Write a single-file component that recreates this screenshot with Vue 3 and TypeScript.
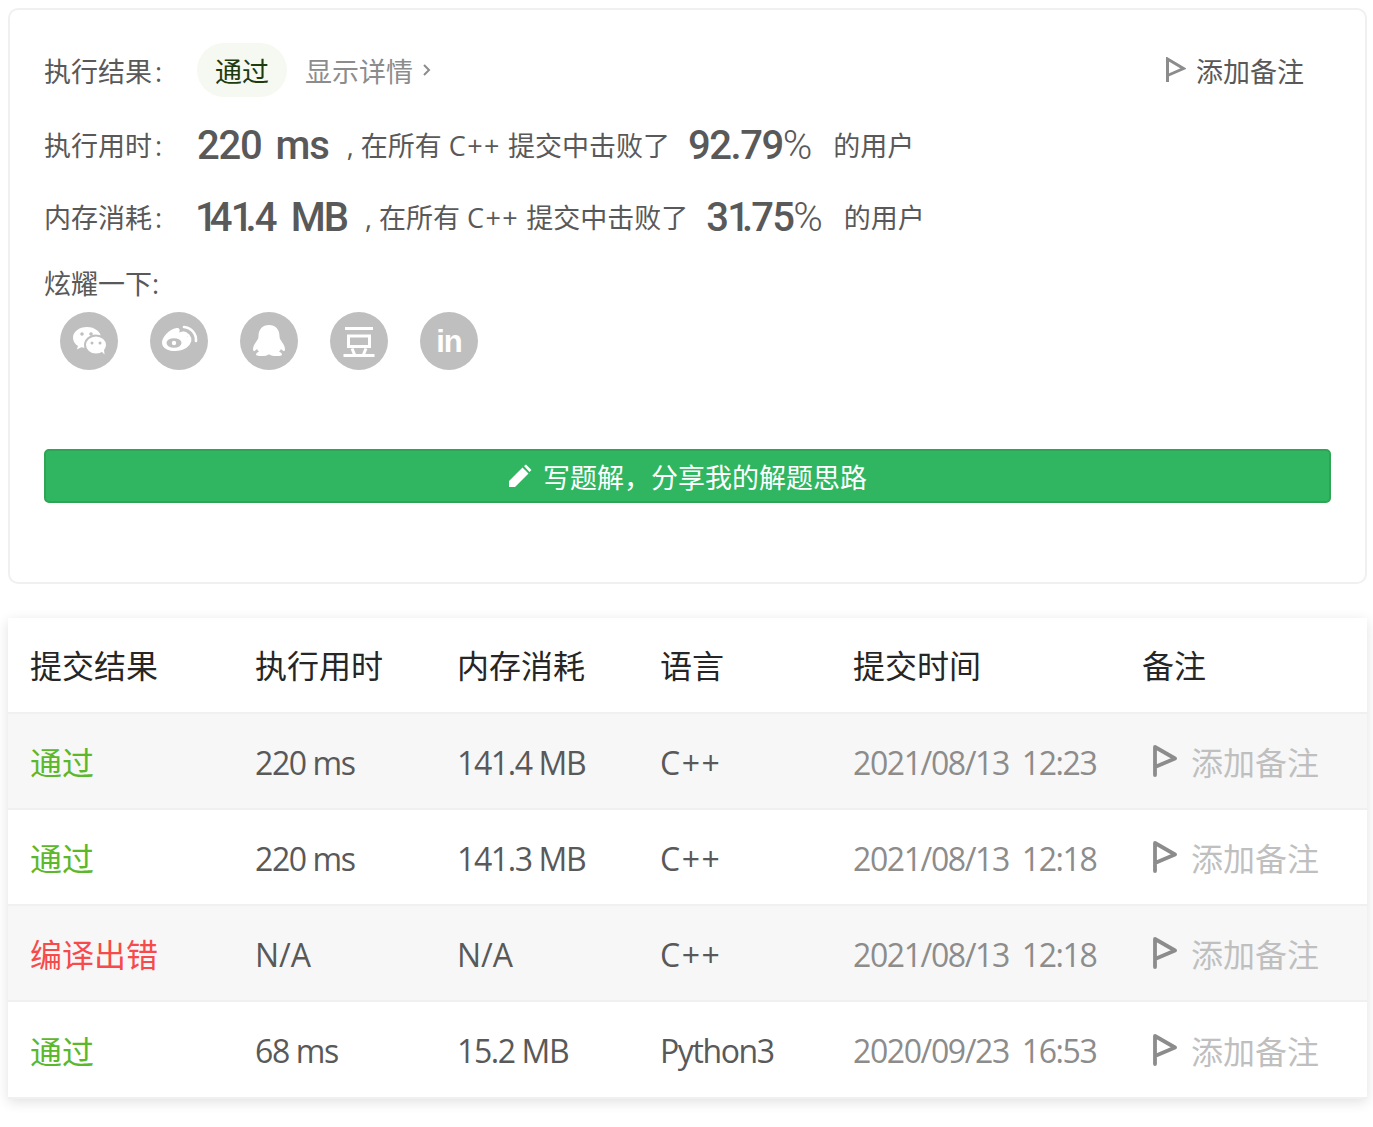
<script setup lang="ts">
interface Sub { status: string; ok: boolean; time: string; mem: string; lang: string; date: string }
const subs: Sub[] = [
  { status: '通过', ok: true, time: '220 ms', mem: '141.4 MB', lang: 'C++', date: '2021/08/13 12:23' },
  { status: '通过', ok: true, time: '220 ms', mem: '141.3 MB', lang: 'C++', date: '2021/08/13 12:18' },
  { status: '编译出错', ok: false, time: 'N/A', mem: 'N/A', lang: 'C++', date: '2021/08/13 12:18' },
  { status: '通过', ok: true, time: '68 ms', mem: '15.2 MB', lang: 'Python3', date: '2020/09/23 16:53' },
]
const heads = ['提交结果', '执行用时', '内存消耗', '语言', '提交时间', '备注']
</script>

<template>
  <div class="page">
    <section class="card">
      <div class="row first">
        <span class="label">执行结果<span class="colon">:</span></span>
        <span class="pill">通过</span>
        <span class="detail">显示详情</span>
        <svg class="chev" viewBox="0 0 10 14" width="10" height="14"><path d="M2 2l5 5-5 5" fill="none" stroke="#8c8c8c" stroke-width="2"/></svg>
        <span class="note">
          <svg viewBox="0 0 20 26" width="20" height="26"><path d="M1.500 25V2l16 9.500-16 7" fill="none" stroke="#8c8c8c" stroke-width="3"/></svg>
          <span>添加备注</span>
        </span>
      </div>
      <div class="row stat second">
        <span class="label">执行用时<span class="colon">:</span></span>
        <b class="big tight1">220<span class="unit">ms</span></b>
        <span class="txt">, 在所有 <span class="cpp">C++</span> 提交中击败了</span>
        <span class="big pct tight2">92.79<i>%</i></span>
        <span class="txt">的用户</span>
      </div>
      <div class="row stat third">
        <span class="label">内存消耗<span class="colon">:</span></span>
        <b class="big mem"><span class="tight3"><span class="one">1</span>4<span class="one">1</span>.4</span><span class="unit mb">MB</span></b>
        <span class="txt">, 在所有 <span class="cpp">C++</span> 提交中击败了</span>
        <span class="big pct tight3">3<span class="one">1</span>.75<i>%</i></span>
        <span class="txt">的用户</span>
      </div>
      <div class="share-label">炫耀一下:</div>
      <div class="share">
        <span class="circle">
          <svg viewBox="0 0 58 58" width="58" height="58">
            <path d="M27 15c-8 0-14 4.800-14 10.700 0 3.400 2 6.300 5 8.300l-1.200 3.600 4.500-2.300c1.800.5 3.700.8 5.700.8 8 0 14-4.700 14-10.400S35 15 27 15z" fill="#fff"/>
            <ellipse cx="36" cy="33" rx="11" ry="9.500" fill="#fff" stroke="#bfbfbf" stroke-width="2"/>
            <path d="M41 39l3.500 3.500-.5-5z" fill="#fff"/>
            <circle cx="22" cy="22" r="1.800" fill="#bfbfbf"/><circle cx="31" cy="22" r="1.800" fill="#bfbfbf"/>
            <circle cx="32" cy="31" r="1.500" fill="#bfbfbf"/><circle cx="40" cy="31" r="1.500" fill="#bfbfbf"/>
          </svg>
        </span>
        <span class="circle">
          <svg viewBox="0 0 58 58" width="58" height="58">
            <g transform="translate(-1 -3)">
              <path d="M26 42c-7.500 0-13-3.300-13-8.300 0-5.200 7-13.700 14.500-14.700 3-.3 3.700 1.700 2.700 4.500 4-1.600 8-1.500 8 2 0 .9-.3 1.700-.3 1.700 2.400.8 4 2.300 4 4.800C42 37 34.500 42 26 42z" fill="#fff"/>
              <ellipse cx="25" cy="34" rx="7.500" ry="4.800" fill="#bfbfbf"/>
              <circle cx="25" cy="34" r="2.200" fill="#fff"/>
            </g>
            <path d="M33 21a7 7 0 0 1 7 8M34 15a13 13 0 0 1 12 14" fill="none" stroke="#fff" stroke-width="2.600" stroke-linecap="round"/>
          </svg>
        </span>
        <span class="circle">
          <svg viewBox="0 0 58 58" width="58" height="58">
            <path d="M29 13c-6.500 0-10.500 4.500-10.500 11 0 2-.5 3-1.500 4.500-1.500 2.500-4 5.500-4 8.500 0 1.500.7 2.500 1.500 2 1-.5 2-1.500 2.500-2 .5 1 1 1.800 2 2.700-1.500.5-3 1.500-3 2.800 0 1.500 3 1.500 6 1.500 2.500 0 5-.5 6.500-1.500h1c1.500 1 4 1.500 6.500 1.500 3 0 6 0 6-1.500 0-1.300-1.500-2.300-3-2.800 1-.9 1.500-1.700 2-2.700.5.500 1.500 1.500 2.500 2 .8.500 1.500-.5 1.500-2 0-3-2.500-6-4-8.500-1-1.500-1.500-2.500-1.500-4.500 0-6.500-4-11-10.500-11z" fill="#fff"/>
          </svg>
        </span>
        <span class="circle">
          <svg viewBox="0 0 58 58" width="58" height="58" fill="none" stroke="#fff" stroke-width="3">
            <path d="M15 16.500h28M18.500 24h21v10.500h-21zM22 36.500l2.500 6M36 36.500l-2.500 6M13.500 43.500h31"/>
          </svg>
        </span>
        <span class="circle in">in</span>
      </div>
      <div class="write">
        <svg viewBox="0 0 24 24" width="24" height="24"><path d="M1 23v-6L14.500 3.500l6 6L7 23zM16 2l2-1.500 5.500 5.500-2 2z" fill="#fff"/></svg>
        <span>写题解，分享我的解题思路</span>
      </div>
    </section>

    <div class="table-wrap">
      <table class="table">
        <colgroup>
          <col class="c1"><col class="c2"><col class="c3"><col class="c4"><col class="c5"><col class="c6">
        </colgroup>
        <thead>
          <tr><th v-for="h in heads" :key="h">{{ h }}</th></tr>
        </thead>
        <tbody>
          <tr v-for="(s, i) in subs" :key="i">
            <td :class="s.ok ? 'ok' : 'err'">{{ s.status }}</td>
            <td :class="s.time !== 'N/A' ? 'lat' : 'plain'">{{ s.time }}</td>
            <td :class="s.mem !== 'N/A' ? 'lat' : 'plain'">{{ s.mem }}</td>
            <td :class="s.lang === 'C++' ? 'cppcell' : 'lat'">{{ s.lang }}</td>
            <td class="lat date">{{ s.date }}</td>
            <td>
              <span class="rnote">
                <svg viewBox="0 0 24 32" width="24" height="32"><path d="M2 30V2l20 11.500L2 22" fill="none" stroke="#8c8c8c" stroke-width="3.800" stroke-linecap="round" stroke-linejoin="round"/></svg>
                <span>添加备注</span>
              </span>
            </td>
          </tr>
        </tbody>
      </table>
    </div>
  </div>
</template>

<style>
body { margin: 0; background: #fff; }
</style>

<style scoped>
.page {
  width: 1373px;
  box-sizing: border-box;
  padding: 8px 6px 28px 8px;
  font-family: "Open Sans", "Noto Sans CJK SC", sans-serif;
  color: #595959;
}
.card {
  box-sizing: border-box;
  height: 576px;
  border: 2px solid #f0f0f0;
  border-radius: 10px;
  padding: 33px 34px 0;
}
.row { display: flex; align-items: center; font-size: 27px; }
.first { height: 54px; }
.label { width: 153px; flex: none; }
.colon { margin-left: 3px; }
.pill {
  width: 90px; height: 54px; border-radius: 27px; background: #f6f9f1;
  color: #1d3b0e; display: flex; align-items: center; justify-content: center;
}
.detail { margin-left: 18px; color: #8c8c8c; }
.chev { margin-left: 9px; }
.note { margin-left: auto; margin-right: 27px; display: flex; align-items: center; gap: 10px; }
.stat { height: 60px; }
.second { margin-top: 18px; }
.third { margin-top: 12px; }
.stat .label, .stat .txt { margin-bottom: 2px; }
.big { font-family: "Roboto", sans-serif; font-size: 40px; font-weight: 500; color: #595959; }
.tight1 { letter-spacing: -1.200px; }
.tight2 { letter-spacing: -1.500px; }
.tight3 { letter-spacing: -1.800px; }
.one { letter-spacing: -8px; }
.unit { margin-left: 14px; }
.mem { margin-left: -2px; }
.mb { margin-left: 15px; letter-spacing: -2px; }
.txt { margin-left: 18px; }
.cpp { letter-spacing: 1.500px; }
.pct { margin-left: 18px; }
.pct i { font-style: normal; font-weight: 300; letter-spacing: 0; }
.stat .pct + .txt { margin-left: 21px; }
.share-label { font-size: 27px; margin-top: 17px; line-height: 40px; }
.share { display: flex; gap: 32px; margin: 8px 0 0 16px; }
.circle {
  width: 58px; height: 58px; border-radius: 50%; background: #bfbfbf;
  display: flex; align-items: center; justify-content: center;
}
.in { color: #fff; font-family: "Liberation Sans", sans-serif; font-weight: 700; font-size: 31px; letter-spacing: -1px; line-height: 1; }
.write {
  box-sizing: border-box;
  height: 54px; margin-top: 79px;
  background: #30b661; border: 2px solid #2ea454; border-radius: 5px;
  color: #fff; font-size: 27px;
  display: flex; align-items: center; justify-content: center; gap: 11px;
}
.table-wrap {
  margin-top: 34px;
  width: 1359px;
  background: #fff;
  box-shadow: 0 3px 12px rgba(0, 0, 0, .12);
}
.table {
  width: 1359px;
  table-layout: fixed;
  border-collapse: collapse;
  font-size: 32px;
}
.c1 { width: 225px; } .c2 { width: 202px; } .c3 { width: 203px; }
.c4 { width: 193px; } .c5 { width: 289px; } .c6 { width: 247px; }
th {
  height: 95px; padding: 0 0 2px 22px; text-align: left; font-weight: 400; color: #262626;
  border-bottom: 2px solid #f0f0f0; box-sizing: border-box;
}
td { height: 96px; padding: 0 0 0 22px; box-sizing: border-box; border-bottom: 2px solid #f0f0f0; white-space: nowrap; }
tbody tr:last-child td { height: 97px; }
tbody tr:nth-child(odd) { background: #f7f7f7; }
.lat { letter-spacing: -1.400px; padding-top: 2px; }
.plain { padding-top: 2px; }
.cppcell { letter-spacing: 1.500px; padding-top: 2px; }
.date { letter-spacing: -1.400px; word-spacing: 6px; color: #8c8c8c; }
.ok { color: #5cb82b; }
.err { color: #f74a4a; }
.rnote { display: flex; align-items: center; gap: 14px; margin-left: 11px; color: #bfbfbf; }
</style>
